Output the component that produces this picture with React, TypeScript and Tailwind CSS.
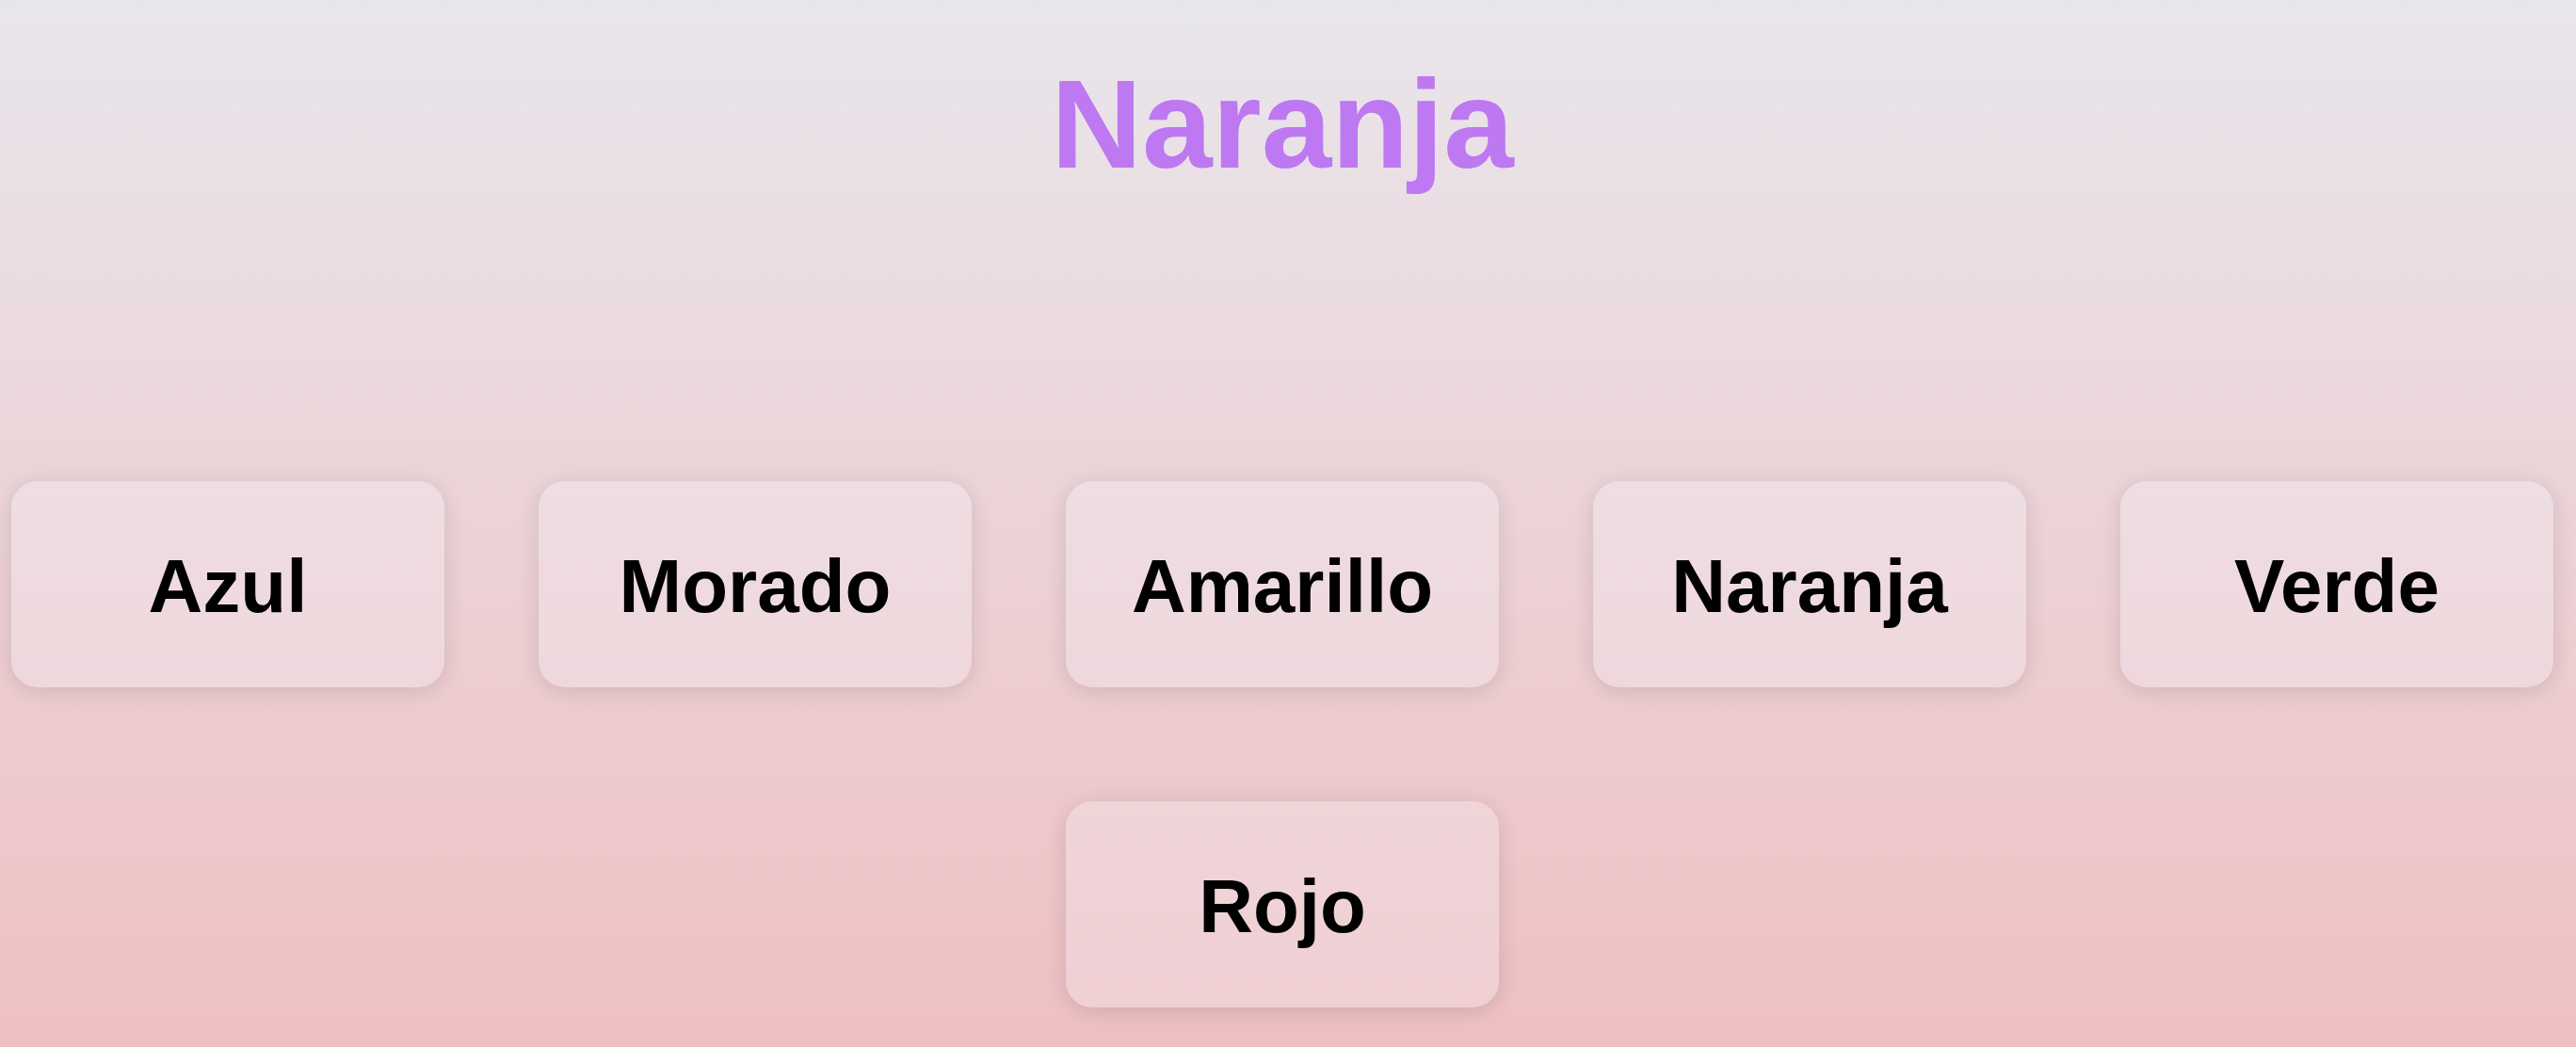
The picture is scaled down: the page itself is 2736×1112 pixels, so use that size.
const colors = ['Azul', 'Morado', 'Amarillo', 'Naranja', 'Verde', 'Rojo'];

export default function App() {
  return (
    <div
      className="min-h-screen w-full bg-gradient-to-b from-[#e8e6ec] to-[#efc0c2] pr-[12px]"
      style={{ fontFamily: '"Liberation Sans", Arial, sans-serif' }}
    >
      <div className="flex flex-col items-center">
        {/* target word */}
        <h1 className="mt-[65px] text-[134px] font-bold leading-none text-[#bd78f2]">Naranja</h1>

        <div className="mt-[312px] flex w-full flex-wrap justify-center gap-x-[100px] gap-y-[121px] px-[12px]">
          {colors.map(c => (
            <button
              key={c}
              className="flex h-[219px] w-[460px] items-center justify-center rounded-[28px] bg-[rgba(246,244,250,0.28)] pt-[4px] text-[80px] font-bold text-black shadow-[0_4px_24px_rgba(0,0,0,0.13)]"
            >
              {c}
            </button>
          ))}
        </div>
      </div>
    </div>
  );
}
